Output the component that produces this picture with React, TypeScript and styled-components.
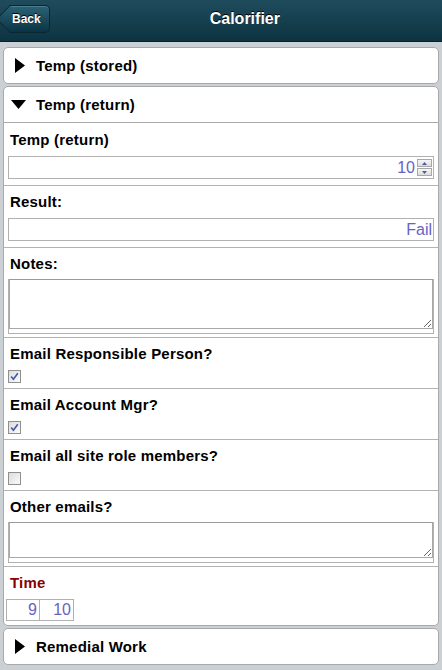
import React from "react";
import styled, { createGlobalStyle } from "styled-components";

const Global = createGlobalStyle`
  html, body { margin: 0; padding: 0; }
  body {
    background: #cbd0d4;
    font-family: "Liberation Sans", Arial, sans-serif;
  }
`;

const Page = styled.div`
  width: 442px;
  min-height: 670px;
  background: #cbd0d4;
`;

const Header = styled.header`
  height: 37px;
  padding-bottom: 4px;
  display: flex;
  align-items: center;
  background: linear-gradient(#1f4c5d, #0d3341);
  border-bottom: 1px solid #08222c;
`;

const BackButton = styled.button`
  position: relative;
  margin-left: 9px;
  height: 28px;
  padding: 0 8px 0 3px;
  border: 1px solid #092733;
  border-left: none;
  border-radius: 0 5px 5px 0;
  background: linear-gradient(#2b6276, #0b3442);
  box-shadow: inset 0 1px 0 rgba(255, 255, 255, 0.18);
  color: #fff;
  font-family: "Liberation Sans", Arial, sans-serif;
  font-size: 12px;
  font-weight: bold;
  text-shadow: 0 -1px 0 #000;
  cursor: pointer;

  &::before {
    content: "";
    position: absolute;
    left: -9px;
    top: 3px;
    width: 19px;
    height: 19px;
    transform: rotate(45deg);
    background: linear-gradient(135deg, #2b6276, #0b3442);
    border-left: 1px solid #092733;
    border-bottom: 1px solid #092733;
    border-radius: 0 0 0 3px;
    z-index: 0;
  }

  span {
    position: relative;
    z-index: 1;
  }
`;

const Title = styled.h1`
  flex: 1;
  margin: 0;
  text-align: center;
  color: #fff;
  font-size: 16px;
  font-weight: bold;
  text-shadow: 0 -1px 0 #000;
  padding-right: 2px;
`;

const Content = styled.main`
  padding: 5px 3px 0 3px;
  display: flex;
  flex-direction: column;
  gap: 2px;
`;

const Heading = styled.div<{ $open?: boolean }>`
  height: 35px;
  display: flex;
  align-items: center;
  background: #fff;
  border: 1px solid #a9a9a9;
  border-radius: ${(p) => (p.$open ? "5px 5px 0 0" : "5px")};
  color: #000;
  font-size: 15px;
  font-weight: bold;
  letter-spacing: 0.2px;
`;

const IconSlot = styled.span<{ $open?: boolean }>`
  width: 32px;
  display: flex;
  align-items: center;
  padding-left: ${(p) => (p.$open ? "7px" : "11px")};
  box-sizing: border-box;
`;

const Panel = styled.section`
  background: #fff;
  border: 1px solid #a9a9a9;
  border-top: none;
  border-radius: 0 0 5px 5px;
`;

const Row = styled.div<{ $first?: boolean }>`
  border-top: ${(p) => (p.$first ? "none" : "1px solid #b3b3b3")};
  padding: ${(p) => (p.$first ? "7px" : "6px")} 4px 0 4px;
`;

const Label = styled.div<{ $accent?: boolean }>`
  height: 18px;
  line-height: 18px;
  padding: 1px 0 0 2px;
  font-size: 15px;
  font-weight: bold;
  letter-spacing: 0.2px;
  color: ${(p) => (p.$accent ? "#8b0000" : "#000")};
`;

const FieldBox = styled.div`
  margin: 7px 0 6px;
  height: 23px;
  box-sizing: border-box;
  border: 1px solid #b1b1b1;
  display: flex;
  align-items: center;
  justify-content: flex-end;
  gap: 2px;
  padding: 0 1px 0 4px;
`;

const FieldValue = styled.span`
  font-size: 16px;
  color: #6464c4;
  line-height: 21px;
`;

const Spinner = styled.span`
  display: flex;
  flex-direction: column;
  width: 15px;
  height: 17px;
  gap: 1px;
`;

const SpinHalf = styled.span`
  flex: 1;
  display: flex;
  align-items: center;
  justify-content: center;
  background: linear-gradient(#f6f6f6, #dcdcdc);
  border: 1px solid #a8a8a8;
`;

const AreaWrap = styled.div<{ $gap: number }>`
  margin: ${(p) => p.$gap}px 0 3px;
  border: 1px solid #b1b1b1;
  border-top: none;
`;

const TextArea = styled.textarea<{ $h: number }>`
  display: block;
  width: 100%;
  height: ${(p) => p.$h}px;
  box-sizing: border-box;
  margin: 0;
  border: 1px solid #a8a8a8;
  border-top-color: #9a9a9a;
  outline: none;
  font-family: "Liberation Sans", Arial, sans-serif;
  font-size: 14px;
  resize: both;
  background: #fff;
`;

const AreaFoot = styled.div`
  height: 4px;
`;

const Check = styled.span`
  margin: 7px 0 5px;
  width: 13px;
  height: 13px;
  box-sizing: border-box;
  display: flex;
  align-items: center;
  justify-content: center;
  border: 1px solid #8e8f8f;
  background: linear-gradient(135deg, #dcdcdc, #fbfbfb);
`;

const TimeRow = styled.div`
  display: flex;
  margin: 7px 0 4px -2px;
`;

const TimeBox = styled.div<{ $first?: boolean }>`
  width: 34px;
  height: 22px;
  box-sizing: border-box;
  border: 1px solid #b1b1b1;
  border-left: ${(p) => (p.$first ? "1px solid #b1b1b1" : "none")};
  display: flex;
  align-items: center;
  justify-content: flex-end;
  padding-right: 2px;
  font-size: 16px;
  color: #6464c4;
`;

const Triangle = ({ open }: { open?: boolean }) =>
  open ? (
    <svg width="15" height="9" viewBox="0 0 15 9">
      <polygon points="0,0 15,0 7.5,9" fill="#000" />
    </svg>
  ) : (
    <svg width="10" height="15" viewBox="0 0 10 15">
      <polygon points="0,0 10,7.5 0,15" fill="#000" />
    </svg>
  );

const CheckMark = () => (
  <svg width="9" height="9" viewBox="0 0 9 9">
    <path d="M1.2 4.6 L3.4 7.2 L7.8 1.2" fill="none" stroke="#3d58a6" strokeWidth="1.6" />
  </svg>
);

const Box = ({ checked }: { checked?: boolean }) => (
  <Check>{checked ? <CheckMark /> : null}</Check>
);

const Collapsed = ({ title }: { title: string }) => (
  <Heading>
    <IconSlot>
      <Triangle />
    </IconSlot>
    {title}
  </Heading>
);

export default function App() {
  return (
    <Page>
      <Global />
      <Header>
        <BackButton>
          <span>Back</span>
        </BackButton>
        <Title>Calorifier</Title>
      </Header>
      <Content>
        <Collapsed title="Temp (stored)" />
        <div>
          <Heading $open>
            <IconSlot $open>
              <Triangle open />
            </IconSlot>
            Temp (return)
          </Heading>
          <Panel>
            <Row $first>
              <Label>Temp (return)</Label>
              <FieldBox>
                <FieldValue>10</FieldValue>
                <Spinner>
                  <SpinHalf>
                    <svg width="5" height="3" viewBox="0 0 5 3">
                      <polygon points="0,3 5,3 2.5,0" fill="#4a5f9a" />
                    </svg>
                  </SpinHalf>
                  <SpinHalf>
                    <svg width="5" height="3" viewBox="0 0 5 3">
                      <polygon points="0,0 5,0 2.5,3" fill="#4a5f9a" />
                    </svg>
                  </SpinHalf>
                </Spinner>
              </FieldBox>
            </Row>
            <Row>
              <Label>Result:</Label>
              <FieldBox>
                <FieldValue>Fail</FieldValue>
              </FieldBox>
            </Row>
            <Row>
              <Label>Notes:</Label>
              <AreaWrap $gap={6}>
                <TextArea $h={50} readOnly />
                <AreaFoot />
              </AreaWrap>
            </Row>
            <Row>
              <Label>Email Responsible Person?</Label>
              <Box checked />
            </Row>
            <Row>
              <Label>Email Account Mgr?</Label>
              <Box checked />
            </Row>
            <Row>
              <Label>Email all site role members?</Label>
              <Box />
            </Row>
            <Row>
              <Label>Other emails?</Label>
              <AreaWrap $gap={6}>
                <TextArea $h={36} readOnly />
                <AreaFoot />
              </AreaWrap>
            </Row>
            <Row>
              <Label $accent>Time</Label>
              <TimeRow>
                <TimeBox $first>9</TimeBox>
                <TimeBox>10</TimeBox>
              </TimeRow>
            </Row>
          </Panel>
        </div>
        <Collapsed title="Remedial Work" />
      </Content>
    </Page>
  );
}
